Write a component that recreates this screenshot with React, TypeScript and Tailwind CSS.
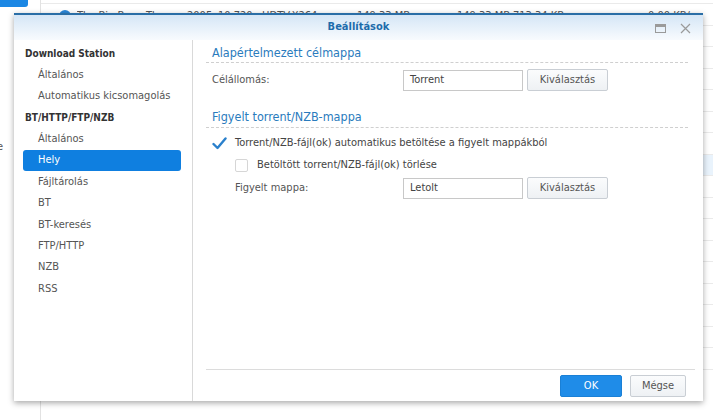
import React from "react";

const font = { fontFamily: '"DejaVu Sans Condensed", "DejaVu Sans", sans-serif' };

function Check() {
  return (
    <svg width="15" height="13" viewBox="0 0 15 13" className="block">
      <path d="M1.5 7 L5.5 11 L13.5 1.5" fill="none" stroke="#2a80cc" strokeWidth="2.4" strokeLinecap="round" strokeLinejoin="round" />
    </svg>
  );
}

function SelectButton() {
  return (
    <div className="ml-[4px] w-[81px] h-[22px] border border-[#c9ced4] rounded-[2px] bg-gradient-to-b from-[#fbfcfd] to-[#eef1f4] flex items-center justify-center text-[#555] text-[11px]">
      Kiválasztás
    </div>
  );
}

function Input({ value }: { value: string }) {
  return (
    <div className="w-[120px] h-[21px] border border-[#c8c8c8] bg-white flex items-center pl-[6px] text-[#444] text-[11px]">
      {value}
    </div>
  );
}

export default function App() {
  const side: { t: string; h?: boolean; sel?: boolean }[] = [
    { t: "Download Station", h: true },
    { t: "Általános" },
    { t: "Automatikus kicsomagolás" },
    { t: "BT/HTTP/FTP/NZB", h: true },
    { t: "Általános" },
    { t: "Hely", sel: true },
    { t: "Fájltárolás" },
    { t: "BT" },
    { t: "BT-keresés" },
    { t: "FTP/HTTP" },
    { t: "NZB" },
    { t: "RSS" },
  ];
  const rows = Array.from({ length: 18 }, (_, i) => i);
  return (
    <div className="relative w-[728px] h-[420px] bg-white overflow-hidden flex" style={font}>
      {/* background app */}
      <div className="w-[41px] h-full border-r border-[#e2e2e2] flex flex-col overflow-hidden">
        <div className="w-[28px] h-[7px] bg-[#1b87e4] rounded-br-[3px]" />
        <div className="mt-[133px] -ml-[3px] text-[11px] text-[#555] leading-[14px]">e</div>
      </div>
      <div className="w-[672px] flex flex-col pt-[3px]">
        {rows.map((i) => (
          <div
            key={i}
            className={`h-[21.5px] shrink-0 border-t border-[#eaeaea] flex text-[11px] text-[#555] leading-[14px] ${
              i === 0 ? "items-start pt-[5px]" : "items-center"
            } ${i === 7 ? "bg-[#e9f3fc]" : ""}`}
          >
            {i === 0 && (
              <>
                <div className="ml-[18px] mt-[1px] w-[12px] h-[12px] rounded-full bg-[#2a86d8]" />
                <span className="ml-[6px] w-[110px] whitespace-nowrap overflow-hidden">The Big Bang Theory</span>
                <span className="w-[170px] whitespace-nowrap overflow-hidden">2005x10.720p.HDTV.X264</span>
                <span className="w-[100px]">149.33 MB</span>
                <span className="w-[56px]">149.33 MB</span>
                <span className="w-[135px]">713.34 KB</span>
                <span>0.00 KB/s</span>
              </>
            )}
          </div>
        ))}
      </div>

      {/* dialog */}
      <div className="absolute left-[14px] top-[13px] w-[689px] h-[388px] bg-white border-t-2 border-[#2a6ea6] shadow-[0_2px_6px_rgba(0,0,0,0.35)] flex flex-col">
        <div className="relative h-[25px] shrink-0 bg-gradient-to-b from-[#d5e6f6] to-[#f8fbfe] flex items-center justify-center">
          <span className="font-bold text-[11px] text-[#1e6cab]">Beállítások</span>
          <div className="absolute right-[12px] top-[8px] flex items-center gap-[14px]">
            <svg width="11" height="9" viewBox="0 0 11 9" className="block">
              <rect x="0.5" y="0.5" width="10" height="8" fill="none" stroke="#9a9a9a" />
              <rect x="0.5" y="0.5" width="10" height="2.5" fill="#9a9a9a" />
            </svg>
            <svg width="11" height="11" viewBox="0 0 11 11" className="block">
              <path d="M1 1 L10 10 M10 1 L1 10" stroke="#9a9a9a" strokeWidth="1.2" />
            </svg>
          </div>
        </div>
        <div className="flex-1 flex min-h-0">
          <div className="w-[179px] shrink-0 border-r border-[#d9d9d9] pt-[3px]">
            {side.map((s, i) => (
              <div
                key={i}
                className={`ml-[9px] w-[158px] h-[21.4px] flex items-center rounded-[3px] ${
                  s.h ? "pl-[2px] font-bold text-[#333] text-[10px]" : "pl-[15px] text-[11px]"
                } ${s.sel ? "bg-[#0f7fe0] text-white" : s.h ? "" : "text-[#555]"}`}
              >
                {s.t}
              </div>
            ))}
          </div>
          <div className="flex-1 flex flex-col">
            <div className="flex-1 pl-[13px] pr-[15px] pt-[4px]">
              <div className="h-[19px] border-b border-dashed border-[#cfcfcf] flex items-center pl-[6px] text-[12.5px] text-[#2a7bbd]">
                Alapértelmezett célmappa
              </div>
              <div className="mt-[6px] h-[22px] flex items-center pl-[6px] text-[11px] text-[#555]">
                <span className="w-[191px]">Célállomás:</span>
                <Input value="Torrent" />
                <SelectButton />
              </div>
              <div className="mt-[17px] h-[20px] border-b border-dashed border-[#cfcfcf] flex items-center pl-[6px] text-[12.5px] text-[#2a7bbd]">
                Figyelt torrent/NZB-mappa
              </div>
              <div className="mt-[5px] h-[20px] flex items-center pl-[6px] text-[11px] text-[#444]">
                <div className="w-[23px]">
                  <Check />
                </div>
                <span>Torrent/NZB-fájl(ok) automatikus betöltése a figyelt mappákból</span>
              </div>
              <div className="mt-[2px] h-[20px] flex items-center pl-[29px] text-[11px] text-[#444]">
                <div className="w-[13px] h-[13px] border border-[#d6d6d6] rounded-[2px] bg-white" />
                <span className="ml-[9px]">Betöltött torrent/NZB-fájl(ok) törlése</span>
              </div>
              <div className="mt-[2px] h-[22px] flex items-center pl-[29px] text-[11px] text-[#555]">
                <span className="w-[168px]">Figyelt mappa:</span>
                <Input value="Letolt" />
                <SelectButton />
              </div>
            </div>
            <div className="h-[32px] shrink-0 ml-[13px] mr-[8px] border-t border-[#dcdcdc] flex justify-end items-start pt-[5px] pr-[9px] gap-[8px] text-[11px]">
              <div className="w-[62px] h-[22px] rounded-[2px] bg-[#1f8ce8] border border-[#1a80d6] text-white flex items-center justify-center">
                OK
              </div>
              <div className="w-[56px] h-[22px] rounded-[2px] bg-gradient-to-b from-[#fbfcfd] to-[#eef1f4] border border-[#c9ced4] text-[#555] flex items-center justify-center">
                Mégse
              </div>
            </div>
          </div>
        </div>
      </div>
    </div>
  );
}
